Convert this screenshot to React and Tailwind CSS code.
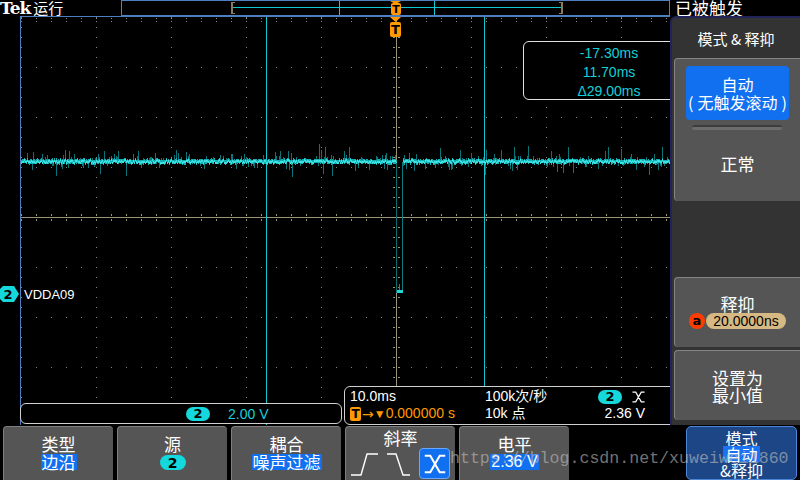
import React from 'react';

function rng(seed) {
  let s = seed;
  return () => {
    s |= 0;
    s = (s + 0x6d2b79f5) | 0;
    let t = Math.imul(s ^ (s >>> 15), 1 | s);
    t = (t + Math.imul(t ^ (t >>> 7), 61 | t)) ^ t;
    return ((t ^ (t >>> 14)) >>> 0) / 4294967296;
  };
}

function Graticule() {
  const dots = [];
  const vx = [1, 76, 151, 226, 301, 451, 526, 601];
  const hy = [51, 101, 151, 251, 301, 351, 401];
  vx.forEach((x) => {
    for (let y = 1; y <= 401; y += 10) dots.push(<rect key={`v${x}-${y}`} x={x} y={y} width="1" height="1" />);
  });
  hy.forEach((y) => {
    for (let x = 1; x <= 650; x += 15) dots.push(<rect key={`h${x}-${y}`} x={x} y={y} width="1" height="1" />);
  });
  for (let x = 1; x <= 650; x += 15) {
    dots.push(<rect key={`t${x}`} x={x} y={2} width="1" height="1" />);
    dots.push(<rect key={`t2${x}`} x={x} y={5} width="1" height="1" />);
  }
  const ticks = [];
  for (let x = 1; x <= 650; x += 15) {
    ticks.push(<rect key={`cx${x}`} x={x} y={198} width="1" height="2" />);
    ticks.push(<rect key={`cx2${x}`} x={x} y={203} width="1" height="2" />);
  }
  for (let y = 1; y <= 409; y += 10) {
    if (y > 20) {
      ticks.push(<rect key={`cy${y}`} x={373} y={y} width="2" height="1" />);
      ticks.push(<rect key={`cy2${y}`} x={378} y={y} width="2" height="1" />);
    }
  }

  const r = rng(11);
  const band = [];
  const bandHi = [];
  const spikes = [];
  for (let x = 1; x < 650; x++) {
    if (x >= 377 && x <= 382) continue;
    const top = 143 + Math.floor(r() * 2) - (r() < 0.25 ? 1 : 0);
    const h = 4 + (r() < 0.4 ? 1 : 0);
    band.push(<rect key={x} x={x} y={top} width="1" height={h} />);
    bandHi.push(<rect key={x} x={x} y={top + 1 + Math.floor(r() * 2)} width="1" height="2" />);
    if (r() < 0.3) {
      const up = r() < 0.55;
      const len = 2 + Math.floor(r() * r() * 14);
      spikes.push(<rect key={`s${x}`} x={x} y={up ? top - len : top + h} width="1" height={len} />);
    }
  }

  return (
    <svg width="650" height="409" className="absolute left-0 top-0">
      <g fill="#858585">{dots}</g>
      <rect x="0" y="201" width="650" height="1" fill="#9c9276" />
      <rect x="376" y="21" width="1" height="388" fill="#9c9276" />
      <g fill="#9c9276">{ticks}</g>
      <rect x="246" y="0" width="1" height="409" fill="#10c8d0" />
      <rect x="464" y="0" width="1" height="409" fill="#10c8d0" />
      <g fill="#0a7478">{spikes}</g>
      <g fill="#12b0b4">{band}</g>
      <g fill="#3ee0e0">{bandHi}</g>
      <rect x="376" y="147" width="1" height="130" fill="#0b6e70" />
      <rect x="382" y="146" width="1" height="131" fill="#0b7a7c" />
      <rect x="379" y="268" width="1" height="8" fill="#0b8c8c" />
      <rect x="377" y="274" width="6" height="3" fill="#25d6d6" />
      <rect x="0" y="0" width="1" height="409" fill="#4f7fbf" />
      <rect x="0" y="0" width="650" height="1" fill="#4f7fbf" />
      <polygon points="370,1 381,1 375.5,6" fill="#ff9a00" />
      <rect x="370" y="6" width="11" height="15" rx="2" fill="#ff9a00" />
      <text x="375.5" y="18" textAnchor="middle" fontSize="13" fontWeight="bold" fill="#000" fontFamily="DejaVu Sans, sans-serif">T</text>
    </svg>
  );
}

function RecordView() {
  return (
    <svg width="547" height="14" className="absolute left-0 top-0">
      <rect x="109" y="1" width="2" height="12" fill="#8c7c5c" />
      <rect x="109" y="1" width="4" height="1" fill="#8c7c5c" />
      <rect x="109" y="12" width="4" height="1" fill="#8c7c5c" />
      <rect x="439" y="1" width="2" height="12" fill="#8c7c5c" />
      <rect x="437" y="1" width="4" height="1" fill="#8c7c5c" />
      <rect x="437" y="12" width="4" height="1" fill="#8c7c5c" />
      <rect x="111" y="6" width="328" height="1" fill="#10c8d0" />
      <rect x="217" y="0" width="1" height="14" fill="#10c8d0" />
      <rect x="312" y="0" width="1" height="14" fill="#10c8d0" />
      <polygon points="268,0 279,0 273.5,3" fill="#ff9a00" />
      <rect x="269" y="2" width="10" height="12" rx="2" fill="#ff9a00" />
      <text x="274" y="12" textAnchor="middle" fontSize="11" fontWeight="bold" fill="#000" fontFamily="DejaVu Sans, sans-serif">T</text>
    </svg>
  );
}

function BothEdge({ w = 14, h = 12, color = '#fff', sw = 1.3 }) {
  return (
    <svg width={w} height={h} viewBox="0 0 14 12">
      <path d="M0.5 0.8 H4 Q7 6 10 11.2 H13.5 M13.5 0.8 H10 Q7 6 4 11.2 H0.5" fill="none" stroke={color} strokeWidth={sw} />
    </svg>
  );
}

function Pill2({ className = '' }) {
  return (
    <div className={`w-[24px] h-[14px] rounded-full bg-[#14d8dc] flex items-center justify-center text-black font-bold text-[13px] leading-none font-['DejaVu_Sans',sans-serif] ${className}`}>2</div>
  );
}

function Btn({ children }) {
  return (
    <div className="w-[110px] h-[54px] bg-[#555555] rounded-t-[4px] border-t border-l border-[#7e7e7e] flex flex-col items-center">
      {children}
    </div>
  );
}

export default function App() {
  const cjk = "font-['Noto_Sans_CJK_SC',sans-serif]";
  return (
    <div className="w-[800px] h-[480px] bg-black relative overflow-hidden text-white font-['Liberation_Sans','Noto_Sans_CJK_SC',sans-serif]">
      {/* top bar */}
      <div className="flex h-[16px]">
        <div className="w-[121px] h-[16px] flex items-center leading-[16px]">
          <span className="font-['DejaVu_Serif',serif] font-bold text-[17px] leading-[16px] tracking-[-1px]">Tek</span>
          <span className={`ml-[3px] text-[15px] leading-[16px] ${cjk}`}>运行</span>
        </div>
        <div className="w-[549px] h-[16px] border border-[#4f7fbf] relative">
          <RecordView />
        </div>
        <div className={`w-[130px] pl-[5px] text-[17px] leading-[16px] ${cjk}`}>已被触发</div>
      </div>

      {/* middle */}
      <div className="flex h-[409px]">
        <div className="w-[20px] relative">
          <svg width="20" height="16" className="absolute left-0 top-[270px]">
            <polygon points="0,3 3,0 14,0 19,8 14,16 3,16 0,13" fill="#14d8dc" />
            <text x="8" y="13" textAnchor="middle" fontSize="13" fontWeight="bold" fill="#000" fontFamily="DejaVu Sans, sans-serif">2</text>
          </svg>
        </div>
        <div className="w-[650px] h-[409px] relative overflow-hidden">
          <Graticule />
          <div className="absolute left-[4px] top-[271px] text-[13px] leading-[16px]">VDDA09</div>
          {/* measurement box */}
          <div className="absolute left-[503px] top-[25px] w-[160px] h-[59px] border border-[#e0e0e0] rounded-[6px] bg-black pt-[2px]">
            <div className="ml-[30px] w-[110px] text-center text-[#14d0d8] text-[14px] leading-[19px]">
              <div>-17.30ms</div>
              <div>11.70ms</div>
              <div>Δ29.00ms</div>
            </div>
          </div>
          {/* left info box */}
          <div className="absolute left-0 top-[387px] w-[322px] h-[21px] border border-[#d0d0d0] rounded-[6px] bg-black flex items-center pl-[165px]">
            <Pill2 />
            <span className="ml-[18px] text-[14px] text-[#14d0d8] leading-none">2.00 V</span>
          </div>
          {/* right info box */}
          <div className="absolute left-[324px] top-[370px] w-[340px] h-[39px] border border-[#d0d0d0] rounded-l-[6px] bg-black pl-[5px] pt-[1px] text-[14px] leading-[17px]">
            <div className="flex items-center h-[17px]">
              <span className="w-[135px]">10.0ms</span>
              <span className="w-[113px]">100k次/秒</span>
              <Pill2 />
              <span className="ml-[10px]"><BothEdge w={13} h={12} /></span>
            </div>
            <div className="flex items-center h-[17px]">
              <span className="w-[135px] flex items-center text-[#ff9a00]">
                <span className="w-[11px] h-[14px] bg-[#ff9a00] rounded-[2px] text-black font-bold text-[12px] leading-[14px] text-center font-['DejaVu_Sans',sans-serif]">T</span>
                <span className="ml-[1px] text-[14px] font-['DejaVu_Sans',sans-serif] leading-none">→</span>
                <span className="text-[12px] leading-none">▼</span>
                <span>0.000000 s</span>
              </span>
              <span className="w-[113px]">10k 点</span>
              <span className="w-[47px] text-right">2.36 V</span>
            </div>
          </div>
        </div>

        {/* right panel */}
        <div className="w-[130px] h-[409px] bg-[#333333] border-l-2 border-t-2 border-[#20245a] rounded-tl-[6px] flex flex-col">
          <div className={`h-[40px] flex items-center justify-center pt-[3px] text-[15px] ${cjk}`}>模式 &amp; 释抑</div>
          <div className="h-[143px] ml-[2px] bg-[#555555] rounded-l-[4px] border-t border-l border-[#858585] flex flex-col">
            <div className={`mt-[7px] ml-[11px] w-[103px] h-[54px] bg-[#1170f0] rounded-[4px] flex flex-col items-center justify-center text-[16px] leading-[18px] ${cjk}`}>
              <div>自动</div>
              <div className="flex"><span className="mr-[4px]">(</span>无触发滚动<span className="ml-[4px]">)</span></div>
            </div>
            <div className="mt-[5px] ml-[17px] w-[90px] h-[5px] rounded-full bg-[#6c6c6c] border-t-2 border-[#3c3c3c]"></div>
            <div className={`flex-1 flex items-center justify-center text-[17px] pb-[4px] ${cjk}`}>正常</div>
          </div>
          <div className="h-[76px]"></div>
          <div className="h-[70px] ml-[2px] bg-[#555555] rounded-l-[4px] border-t border-l border-[#858585] flex flex-col items-center">
            <div className={`mt-[16px] text-[17px] leading-[20px] ${cjk}`}>释抑</div>
            <div className="flex items-center mt-[-1px]">
              <div className="w-[16px] h-[16px] rounded-full bg-[#ff3c00] text-black font-bold text-[13px] leading-[15px] text-center font-['DejaVu_Sans',sans-serif]">a</div>
              <div className="ml-[1px] w-[80px] h-[16px] rounded-full bg-[#d6b882] text-black text-[14px] leading-[16px] text-center">20.0000ns</div>
            </div>
          </div>
          <div className="h-[3px]"></div>
          <div className={`h-[70px] ml-[2px] bg-[#555555] rounded-l-[4px] border-t border-l border-[#858585] flex flex-col items-center justify-center text-[17px] leading-[17px] ${cjk}`}>
            <div>设置为</div>
            <div>最小值</div>
          </div>
        </div>
      </div>

      {/* bottom bar */}
      <div className={`h-[55px] flex pt-[1px] pl-[3px] gap-[4px] ${cjk}`}>
        <Btn>
          <div className="mt-[8px] text-[17px] leading-[17px]">类型</div>
          <div className="mt-[2px] px-[1px] bg-[#1170f0] text-[17px] leading-[16px]">边沿</div>
        </Btn>
        <Btn>
          <div className="mt-[8px] text-[17px] leading-[17px]">源</div>
          <Pill2 className="mt-[3px] w-[26px] h-[15px] text-[14px]" />
        </Btn>
        <Btn>
          <div className="mt-[8px] text-[17px] leading-[17px]">耦合</div>
          <div className="mt-[2px] px-[1px] bg-[#1170f0] text-[17px] leading-[16px]">噪声过滤</div>
        </Btn>
        <div className="w-[110px] h-[54px] bg-[#555555] rounded-t-[4px] border-t border-l border-[#7e7e7e] flex flex-col">
          <div className="text-center mt-[3px] text-[17px] leading-[16px]">斜率</div>
          <div className="flex items-center mt-[2px] ml-[4px]">
            <svg width="30" height="26" viewBox="0 0 30 26">
              <path d="M1 24 H11 L17 3 H28" fill="none" stroke="#fff" strokeWidth="1.4" />
            </svg>
            <svg width="28" height="26" viewBox="0 0 28 26" className="ml-[6px]">
              <path d="M1 3 H10 L17 24 H24" fill="none" stroke="#fff" strokeWidth="1.4" />
            </svg>
            <div className="ml-[5px] w-[31px] h-[31px] rounded-[4px] bg-[#1170f0] border border-[#6aa8ff] flex items-center justify-center">
              <BothEdge w={22} h={22} sw={1.3} />
            </div>
          </div>
        </div>
        <Btn>
          <div className="mt-[8px] text-[17px] leading-[17px]">电平</div>
          <div className="mt-[2px] px-[1px] bg-[#1170f0] text-[16px] leading-[16px] font-['Liberation_Sans',sans-serif]">2.36 V</div>
        </Btn>
        <div className="ml-[113px] w-[111px] h-[54px] bg-[#1d4686] rounded-[5px] border border-[#4d86d8] flex flex-col items-center text-[16px] leading-[16px]">
          <div className="mt-[3px]">模式</div>
          <div className="px-[2px] bg-[#1a72f2]">自动</div>
          <div>&amp;释抑</div>
        </div>
      </div>

      <div className="absolute left-[450px] top-[449px] text-[16.6px] leading-[20px] text-[#bdbdbd] opacity-60 font-['Liberation_Mono',monospace] whitespace-nowrap">https://blog.csdn.net/xuweiwei1860</div>
    </div>
  );
}
